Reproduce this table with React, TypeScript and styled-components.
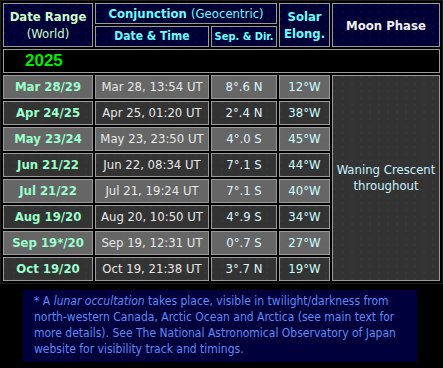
import styled, { createGlobalStyle } from 'styled-components'

const rows = [
  { range: 'Mar 28/29', date: 'Mar 28, 13:54 UT', sep: '8°.6 N', elong: '12°W' },
  { range: 'Apr 24/25', date: 'Apr 25, 01:20 UT', sep: '2°.4 N', elong: '38°W' },
  { range: 'May 23/24', date: 'May 23, 23:50 UT', sep: '4°.0 S', elong: '45°W' },
  { range: 'Jun 21/22', date: 'Jun 22, 08:34 UT', sep: '7°.1 S', elong: '44°W' },
  { range: 'Jul 21/22', date: 'Jul 21, 19:24 UT', sep: '7°.1 S', elong: '40°W' },
  { range: 'Aug 19/20', date: 'Aug 20, 10:50 UT', sep: '4°.9 S', elong: '34°W' },
  { range: 'Sep 19*/20', date: 'Sep 19, 12:31 UT', sep: '0°.7 S', elong: '27°W' },
  { range: 'Oct 19/20', date: 'Oct 19, 21:38 UT', sep: '3°.7 N', elong: '19°W' },
]

const GlobalStyle = createGlobalStyle`
  html, body {
    margin: 0;
    background: #000;
  }
  body {
    font-family: 'DejaVu Sans Condensed', 'DejaVu Sans', sans-serif;
    font-size: 13px;
  }
`

// faint speckle like the old tiled background
const dots = `radial-gradient(circle at 1px 1px, rgba(110, 150, 110, 0.1) 0.5px, transparent 1px)`

const Page = styled.div`
  width: 443px;
  height: 368px;
  background: #000;
  overflow: hidden;
`

const Table = styled.table`
  width: 443px;
  table-layout: fixed;
  border-collapse: separate;
  border-spacing: 2px;
  border: 1px solid #1c1c1c;
  background: #000;
`

const Cell = styled.td<{ $tone?: 'light' | 'dark' }>`
  border: 1px solid #9a9a9a;
  padding: 0;
  text-align: center;
  vertical-align: middle;
  background-color: ${(p) => (p.$tone === 'light' ? '#666666' : '#333333')};
  background-image: ${dots};
  background-size: 9px 7px;
  height: 22px;
  line-height: 22px;
  white-space: nowrap;
`

const HeadCell = styled.th<{ $color?: string; $size?: number }>`
  border: 1px solid #9a9a9a;
  padding: 0;
  background-color: #000036;
  background-image: ${dots};
  background-size: 9px 7px;
  color: ${(p) => p.$color || '#66ffff'};
  font-size: ${(p) => p.$size || 13}px;
  font-weight: bold;
  text-align: center;
  vertical-align: middle;
  line-height: 17px;
  height: 19px;
  white-space: nowrap;
`

const Light = styled.span`
  font-weight: normal;
`

const YearCell = styled.td`
  border: 1px solid #9a9a9a;
  background: #000;
  color: #00ee00;
  font-family: 'Liberation Sans', Arial, sans-serif;
  font-weight: bold;
  font-size: 17px;
  height: 22px;
  padding: 0 0 0 21px;
  text-align: left;
`

const RangeCell = styled(Cell)`
  color: #99ffcc;
  font-weight: bold;
`

const DateCell = styled(Cell)`
  color: #e8e8e8;
`

const SepCell = styled(Cell)`
  color: #ddf4ff;
`

const ElongCell = styled(Cell)`
  color: #ccffff;
`

const PhaseCell = styled(Cell)`
  background-color: #333333;
  color: #ccf4ff;
  line-height: 16px;
  white-space: normal;
`

const Note = styled.div`
  width: 372px;
  margin: 6px 0 0 23px;
  padding: 3px 11px 5px;
  background: #00003c;
  color: #5c8cf4;
  font-size: 12px;
  line-height: 16px;
`

export default function App() {
  return (
    <Page>
      <GlobalStyle />
      <Table>
        <colgroup>
          <col style={{ width: 90 }} />
          <col style={{ width: 114 }} />
          <col style={{ width: 66 }} />
          <col style={{ width: 51 }} />
          <col style={{ width: 108 }} />
        </colgroup>
        <thead>
          <tr>
            <HeadCell rowSpan={2} $color="#ccffcc">
              Date Range
              <br />
              <Light>(World)</Light>
            </HeadCell>
            <HeadCell colSpan={2}>
              Conjunction <Light>(Geocentric)</Light>
            </HeadCell>
            <HeadCell rowSpan={2}>
              Solar
              <br />
              Elong.
            </HeadCell>
            <HeadCell rowSpan={2} $color="#f0f0f0">
              Moon Phase
            </HeadCell>
          </tr>
          <tr>
            <HeadCell $size={12}>Date &amp; Time</HeadCell>
            <HeadCell $size={11}>Sep. &amp; Dir.</HeadCell>
          </tr>
        </thead>
        <tbody>
          <tr>
            <YearCell colSpan={5}>2025</YearCell>
          </tr>
          {rows.map((r, i) => {
            const tone = i % 2 === 0 ? 'light' : 'dark'
            return (
              <tr key={r.range}>
                <RangeCell $tone={tone}>{r.range}</RangeCell>
                <DateCell $tone={tone}>{r.date}</DateCell>
                <SepCell $tone={tone}>{r.sep}</SepCell>
                <ElongCell $tone={tone}>{r.elong}</ElongCell>
                {i === 0 && (
                  <PhaseCell rowSpan={rows.length}>
                    Waning Crescent
                    <br />
                    throughout
                  </PhaseCell>
                )}
              </tr>
            )
          })}
        </tbody>
      </Table>
      <Note>
        * A <i>lunar occultation</i> takes place, visible in twilight/darkness from north-western Canada,
        Arctic Ocean and Arctica (see main text for more details). See The National Astronomical
        Observatory of Japan website for visibility track and timings.
      </Note>
    </Page>
  )
}
